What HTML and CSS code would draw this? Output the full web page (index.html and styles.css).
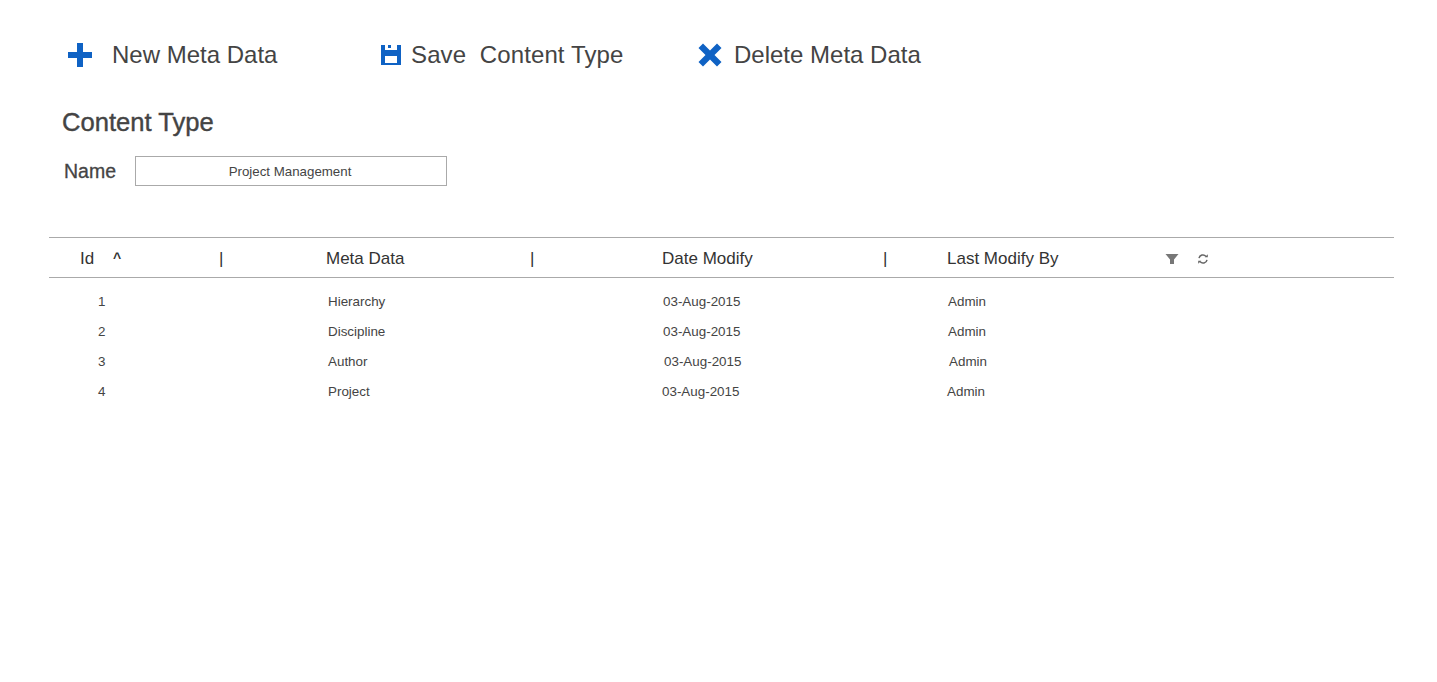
FILE: index.html
```html
<!DOCTYPE html>
<html lang="en">
<head>
    <meta charset="UTF-8">
    <meta name="viewport" content="width=device-width, initial-scale=1.0">
    <title>Content Type</title>
    <link rel="stylesheet" href="styles.css">
</head>
<body>
    <div class="toolbar">
        <a class="tool tool-new">
            <svg class="tool-icon" width="24" height="24" viewBox="0 0 24 24"><path fill="#0f62c4" d="M9 0h6v9h9v6h-9v9H9v-9H0V9h9z"/></svg>
            <span>New Meta Data</span>
        </a>
        <a class="tool tool-save">
            <svg class="tool-icon" width="20" height="20" viewBox="0 0 20 20"><path fill="#0f62c4" fill-rule="evenodd" d="M0 0h20v20H0zM4 0v5h12V0zM7 0h3v3H7zM4 11v7h12v-7z"/></svg>
            <span>Save&nbsp; Content Type</span>
        </a>
        <a class="tool tool-delete">
            <svg class="tool-icon" width="24" height="24" viewBox="0 0 24 24"><path fill="#0f62c4" d="M5 0.500l7 7 7-7 4.500 4.500-7 7 7 7-4.500 4.500-7-7-7 7L0.500 19l7-7-7-7z"/></svg>
            <span>Delete Meta Data</span>
        </a>
    </div>

    <h2 class="section-title">Content Type</h2>

    <div class="name-field">
        <label for="name">Name</label>
        <input type="text" id="name" value="Project Management">
    </div>

    <div class="meta-table">
        <div class="table-head">
            <div class="sort-cell">Id <span class="caret">^</span></div>
            <div>|</div>
            <div>Meta Data</div>
            <div>|</div>
            <div>Date Modify</div>
            <div>|</div>
            <div>Last Modify By</div>
            <div class="head-icons">
                <svg width="14" height="12" viewBox="0 0 14 12"><path fill="#777" d="M0.500 1h13L9 6.500V11H5V6.500z"/></svg>
                <svg width="12" height="12" viewBox="0 0 12 12" fill="none" stroke="#666" stroke-width="1.500"><path d="M2 5.200A4 4 0 0 1 9 3.400"/><path d="M10 6.800A4 4 0 0 1 3 8.600"/><path fill="#666" stroke="none" d="M7.800 4.300h3V1.300zM4.200 7.700h-3v3z"/></svg>
            </div>
        </div>
        <div class="table-row"><div class="id-cell">1</div><div>Hierarchy</div><div>03-Aug-2015</div><div>Admin</div></div>
        <div class="table-row"><div class="id-cell">2</div><div>Discipline</div><div>03-Aug-2015</div><div>Admin</div></div>
        <div class="table-row row-right"><div class="id-cell">3</div><div>Author</div><div>03-Aug-2015</div><div>Admin</div></div>
        <div class="table-row row-left"><div class="id-cell">4</div><div>Project</div><div>03-Aug-2015</div><div>Admin</div></div>
    </div>
</body>
</html>
```

FILE: styles.css
```css
body {
    font-family: 'Liberation Sans', Arial, sans-serif;
    background-color: #fff;
    color: #444;
    margin: 0;
    padding: 40px 43px 0 49px;
}

.toolbar {
    display: flex;
    align-items: center;
    height: 30px;
    padding-left: 19px;
}

.tool {
    display: flex;
    align-items: center;
    font-size: 24px;
    color: #444;
}

.tool-new {
    width: 313px;
    gap: 20px;
}

.tool-save {
    width: 317px;
    gap: 10px;
    letter-spacing: 0.12px;
}

.tool-delete {
    gap: 12px;
}

.tool-icon {
    flex: none;
}

.section-title {
    font-size: 25.6px;
    font-weight: normal;
    -webkit-text-stroke: 0.4px #444;
    line-height: 30px;
    margin: 37px 0 0 13px;
}

.name-field {
    display: flex;
    align-items: center;
    margin: 19px 0 0 15px;
}

.name-field label {
    width: 71px;
    font-size: 19.5px;
    -webkit-text-stroke: 0.3px #444;
}

.name-field input {
    width: 312px;
    height: 30px;
    box-sizing: border-box;
    border: 1px solid #aaa;
    padding: 0 2px 0 0;
    font-family: inherit;
    font-size: 13.3px;
    color: #444;
    text-align: center;
}

.meta-table {
    margin-top: 51px;
}

.table-head {
    display: grid;
    grid-template-columns: 139px 107px 204px 132px 221px 64px 218px 1fr;
    align-items: center;
    height: 37px;
    padding: 2px 0 0 31px;
    border-top: 1px solid #aaa;
    border-bottom: 1px solid #aaa;
    font-size: 17px;
    color: #333;
}

.caret {
    margin-left: 14px;
    font-size: 14px;
    font-weight: bold;
    vertical-align: 1px;
}

.head-icons {
    display: flex;
    align-items: center;
    gap: 18px;
}

.table-row {
    display: grid;
    grid-template-columns: 248px 335px 285px 1fr;
    align-items: center;
    height: 30px;
    padding-left: 31px;
    font-size: 13.4px;
    color: #444;
}

.id-cell {
    padding-left: 18px;
}

.table-head + .table-row {
    margin-top: 8px;
}

.row-right {
    grid-template-columns: 248px 336px 285px 1fr;
}

.row-left {
    grid-template-columns: 248px 334px 285px 1fr;
}
```
